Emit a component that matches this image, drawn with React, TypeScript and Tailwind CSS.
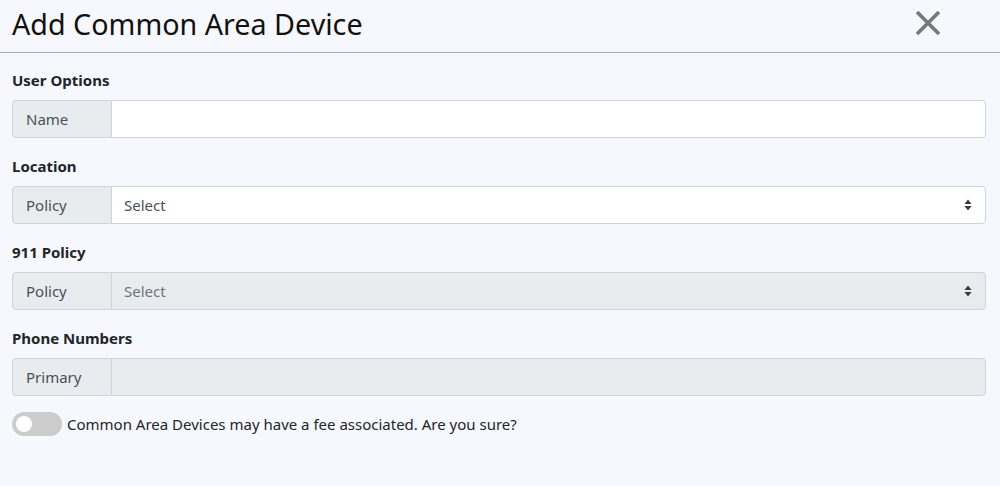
import React from "react";

const Arrows = () => (
  <svg width="8" height="12" viewBox="0 0 8 12" className="absolute right-[13px] top-1/2 -translate-y-1/2">
    <path d="M4 0.5 L7.5 5 H0.5 Z" fill="#343a40" />
    <path d="M4 11.5 L7.5 7 H0.5 Z" fill="#343a40" />
  </svg>
);

const Group = ({ label, children, disabled }: { label: string; children?: React.ReactNode; disabled?: boolean }) => (
  <div className="flex h-[38px] w-full">
    <div className="flex w-[100px] shrink-0 items-center rounded-l-[4px] border border-[#ced4da] bg-[#e9ecef] pl-[13px] text-[15px] text-[#495057]">
      {label}
    </div>
    <div
      className={
        "relative -ml-px flex flex-1 items-center rounded-r-[4px] border border-[#ced4da] pl-[12px] text-[15px] text-[#495057] " +
        (disabled ? "bg-[#e9ecef]" : "bg-white")
      }
    >
      {children}
    </div>
  </div>
);

const Section = ({ title, children }: { title: string; children: React.ReactNode }) => (
  <div className="flex flex-col">
    <div className="h-[24px] text-[15px] font-bold leading-[24px] text-[#212529]">{title}</div>
    <div className="mt-[8px]">{children}</div>
  </div>
);

export default function App() {
  return (
    <div className="h-[486px] w-[1000px] bg-[#f7f8fd]" style={{ fontFamily: '"Segoe UI", "Noto Sans", sans-serif' }}>
      <div className="flex h-[53px] items-center justify-between border-b border-[#aaaaaa] pl-[12px] pr-[59px]">
        <div className="mt-[-4px] text-[28.7px] leading-none text-[#111]">Add Common Area Device</div>
        <svg width="26" height="26" viewBox="0 0 26 26" className="mt-[-6px]">
          <path d="M2 2 L24 24 M24 2 L2 24" stroke="#777" strokeWidth="3.6" strokeLinecap="butt" />
        </svg>
      </div>
      <div className="flex flex-col gap-[16px] pl-[12px] pr-[14px] pt-[15px]">
        <Section title="User Options">
          <Group label="Name" />
        </Section>
        <Section title="Location">
          <Group label="Policy">
            Select
            <Arrows />
          </Group>
        </Section>
        <Section title="911 Policy">
          <Group label="Policy" disabled>
            <span className="text-[#6c757d]">Select</span>
            <Arrows />
          </Group>
        </Section>
        <Section title="Phone Numbers">
          <Group label="Primary" disabled />
        </Section>
      </div>
      <div className="mt-[16px] flex items-center gap-[5px] px-[12px]">
        <div className="relative h-[24px] w-[50px] rounded-full bg-[#cccccc]">
          <div className="absolute left-[4px] top-[4px] h-[16px] w-[16px] rounded-full bg-white" />
        </div>
        <div className="text-[15px] text-[#212529]">Common Area Devices may have a fee associated. Are you sure?</div>
      </div>
    </div>
  );
}
